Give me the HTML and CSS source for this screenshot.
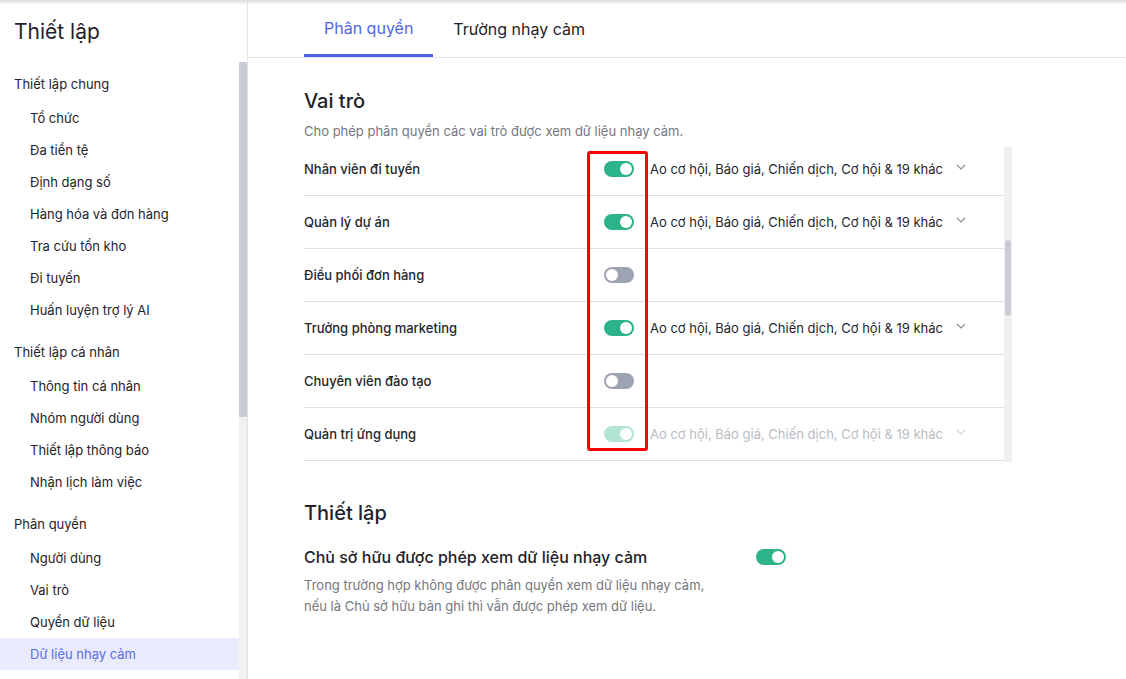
FILE: index.html
```html
<!DOCTYPE html>
<html lang="vi">
<head>
<meta charset="utf-8">
<link rel="stylesheet" href="styles.css">
</head>
<body>
<div class="topshade"></div>
<div class="app">
  <aside class="sidebar">
    <h1 class="side-title">Thiết lập</h1>
    <div class="side-scroll">
      <nav class="side-nav">
        <div class="grp">Thiết lập chung</div>
        <a class="item">Tổ chức</a>
        <a class="item">Đa tiền tệ</a>
        <a class="item">Định dạng số</a>
        <a class="item">Hàng hóa và đơn hàng</a>
        <a class="item">Tra cứu tồn kho</a>
        <a class="item">Đi tuyến</a>
        <a class="item">Huấn luyện trợ lý AI</a>
        <div class="grp">Thiết lập cá nhân</div>
        <a class="item">Thông tin cá nhân</a>
        <a class="item">Nhóm người dùng</a>
        <a class="item">Thiết lập thông báo</a>
        <a class="item">Nhận lịch làm việc</a>
        <div class="grp">Phân quyền</div>
        <a class="item">Người dùng</a>
        <a class="item">Vai trò</a>
        <a class="item">Quyền dữ liệu</a>
        <a class="item active">Dữ liệu nhạy cảm</a>
      </nav>
      <div class="side-bar"><div class="side-thumb"></div></div>
    </div>
  </aside>
  <main class="main">
    <div class="tabs">
      <div class="tab active">Phân quyền</div>
      <div class="tab">Trường nhạy cảm</div>
    </div>
    <div class="content">
      <h2 class="sec-title">Vai trò</h2>
      <p class="sec-desc">Cho phép phân quyền các vai trò được xem dữ liệu nhạy cảm.</p>
      <div class="roles">
        <div class="roles-list">
          <div class="roles-inner">
            <div class="row">
              <span class="role">Nhân viên đi tuyến</span>
              <span class="tg on"></span>
              <span class="objs">Ao cơ hội, Báo giá, Chiến dịch, Cơ hội &amp; 19 khác</span>
              <svg class="chev" width="10" height="6" viewBox="0 0 10 6"><path d="M1 1l4 4 4-4" fill="none" stroke="#8a8f9c" stroke-width="1.2"/></svg>
            </div>
            <div class="row">
              <span class="role">Quản lý dự án</span>
              <span class="tg on"></span>
              <span class="objs">Ao cơ hội, Báo giá, Chiến dịch, Cơ hội &amp; 19 khác</span>
              <svg class="chev" width="10" height="6" viewBox="0 0 10 6"><path d="M1 1l4 4 4-4" fill="none" stroke="#8a8f9c" stroke-width="1.2"/></svg>
            </div>
            <div class="row">
              <span class="role">Điều phối đơn hàng</span>
              <span class="tg off"></span>
            </div>
            <div class="row">
              <span class="role">Trưởng phòng marketing</span>
              <span class="tg on"></span>
              <span class="objs">Ao cơ hội, Báo giá, Chiến dịch, Cơ hội &amp; 19 khác</span>
              <svg class="chev" width="10" height="6" viewBox="0 0 10 6"><path d="M1 1l4 4 4-4" fill="none" stroke="#8a8f9c" stroke-width="1.2"/></svg>
            </div>
            <div class="row">
              <span class="role">Chuyên viên đào tạo</span>
              <span class="tg off"></span>
            </div>
            <div class="row">
              <span class="role">Quản trị ứng dụng</span>
              <span class="tg on dis"></span>
              <span class="objs dis">Ao cơ hội, Báo giá, Chiến dịch, Cơ hội &amp; 19 khác</span>
              <svg class="chev" width="10" height="6" viewBox="0 0 10 6"><path d="M1 1l4 4 4-4" fill="none" stroke="#cfd2d9" stroke-width="1.2"/></svg>
            </div>
          </div>
        </div>
        <div class="roles-bar"><div class="roles-thumb"></div></div>
        <div class="highlight"></div>
      </div>

      <h2 class="sec-title s2">Thiết lập</h2>
      <div class="owner">
        <span class="owner-label">Chủ sở hữu được phép xem dữ liệu nhạy cảm</span>
        <span class="tg on"></span>
      </div>
      <p class="owner-desc">Trong trường hợp không được phân quyền xem dữ liệu nhạy cảm,<br>nếu là Chủ sở hữu bản ghi thì vẫn được phép xem dữ liệu.</p>
    </div>
  </main>
</div>
</body>
</html>
```

FILE: styles.css
```css
* { box-sizing: border-box; }
html, body { margin: 0; padding: 0; }
body {
  font-family: Inter, "Noto Sans", sans-serif;
  color: #1f2229;
  background: #fff;
  width: 1126px;
  height: 679px;
  overflow: hidden;
  position: relative;
}
.topshade {
  position: absolute;
  left: 0; right: 0; top: 0;
  height: 5px;
  background: linear-gradient(#dcdcdc, rgba(255,255,255,0));
  z-index: 5;
}
.app { display: flex; height: 679px; }
.sidebar {
  width: 248px;
  border-right: 1px solid #e2e3e6;
  display: flex;
  flex-direction: column;
}
.side-title {
  margin: 0;
  font-size: 21px;
  font-weight: 400;
  padding: 20px 0 0 14px;
  height: 62px;
  line-height: 24px;
}
.side-scroll { flex: 1; display: flex; min-height: 0; }
.side-nav { flex: 1; display: flex; flex-direction: column; padding-top: 10px; }
.grp {
  font-size: 13px;
  padding-left: 14px;
  height: 24px;
  line-height: 24px;
  margin-bottom: 6px;
}
.side-nav .item + .grp { margin-top: 14px; }
.item {
  font-size: 13px;
  padding-left: 30px;
  height: 32px;
  line-height: 32px;
  color: #1f2229;
}
.item.active { background: #e9ebfc; color: #5a6ee6; }
.side-bar { width: 8px; background: #f1f1f1; }
.side-thumb { height: 355px; background: #c8ccd5; border-radius: 2px 2px 0 0; }

.main { flex: 1; display: flex; flex-direction: column; }
.tabs {
  height: 58px;
  border-bottom: 1px solid #e2e3e6;
  display: flex;
  padding-left: 56px;
}
.tab {
  font-size: 16px;
  padding: 2px 20px 0;
  line-height: 55px;
  color: #1f2229;
}
.tab.active {
  color: #4f66e6;
  border-bottom: 3px solid #4a63e7;
  line-height: 52px;
}
.content { padding: 30px 0 0 56px; }
.sec-title {
  margin: 0;
  font-size: 20px;
  font-weight: 500;
  line-height: 26px;
}
.sec-desc {
  margin: 8px 0 0;
  font-size: 13px;
  color: #74777f;
  line-height: 18px;
}
.roles {
  position: relative;
  display: flex;
  width: 708px;
  height: 315px;
  margin-top: 7px;
}
.roles-list { width: 700px; height: 315px; overflow: hidden; }
.roles-inner { margin-top: -4px; }
.row {
  display: flex;
  align-items: center;
  height: 53px;
  border-bottom: 1px solid #dddfe3;
}
.role { width: 300px; font-size: 13px; font-weight: 500; color: #23262d; }
.tg {
  width: 30px; height: 16px;
  border-radius: 8px;
  position: relative;
  flex-shrink: 0;
}
.tg::after {
  content: "";
  position: absolute;
  top: 2px;
  width: 12px; height: 12px;
  border-radius: 50%;
  background: #fff;
}
.tg.on { background: #2db38a; }
.tg.on::after { right: 2px; }
.tg.off { background: #9ea3b4; }
.tg.off::after { left: 2px; }
.tg.dis { background: #b2e5d3; }
.objs { margin-left: 16px; font-size: 13px; color: #23262d; }
.objs.dis { color: #b9bcc2; }
.chev { margin-left: 13px; margin-top: -5px; }
.roles-bar { width: 8px; background: #f0f0f0; position: relative; }
.roles-thumb {
  position: absolute;
  left: 1px; top: 93px;
  width: 6px; height: 76px;
  border-radius: 3px;
  background: #c8ccd5;
}
.highlight {
  position: absolute;
  left: 283px; top: 4px;
  width: 61px; height: 300px;
  border: 3px solid #f00;
  border-radius: 3px;
}
.sec-title.s2 { margin-top: 38px; }
.owner {
  display: flex;
  align-items: center;
  width: 482px;
  justify-content: space-between;
  margin-top: 21px;
}
.owner-label { font-size: 16px; font-weight: 500; color: #1f2229; }
.owner-desc {
  margin: 8px 0 0;
  font-size: 13px;
  line-height: 21px;
  color: #74777f;
}
```
